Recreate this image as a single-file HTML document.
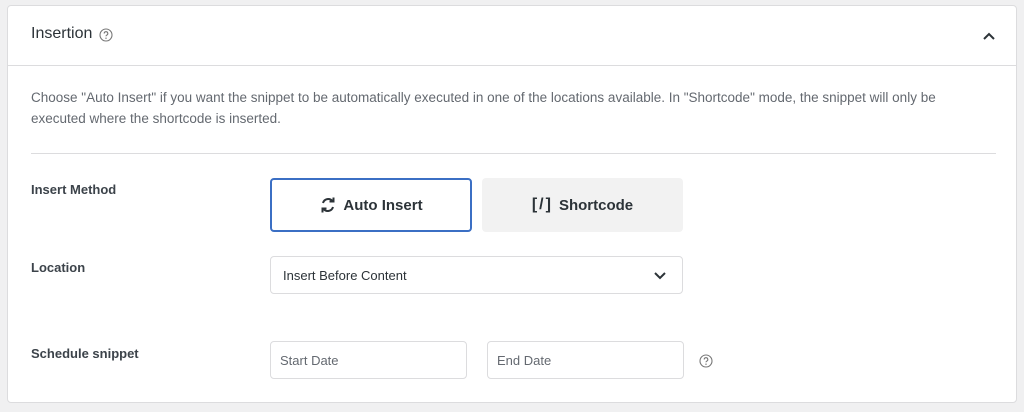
<!DOCTYPE html>
<html><head><style>
body{margin:0;width:1024px;height:412px;background:#f0f0f1;font-family:"Liberation Sans",sans-serif;position:relative;overflow:hidden;color:#2c3338}
.panel{position:absolute;left:7px;top:5px;width:1010px;height:398px;background:#fff;border:1px solid #dcdcde;border-radius:4px;box-sizing:border-box}
.hdr{height:59px;border-bottom:1px solid #dcdcde;position:relative}
.abs{position:absolute}
.lbl{position:absolute;left:23px;font-size:13px;font-weight:bold;color:#3c434a}
.box{position:absolute;box-sizing:border-box;border:1px solid #dcdcde;border-radius:4px;font-size:13px;color:#50575e}
</style></head><body>
<div class="panel">
 <div class="hdr">
  <div class="abs" style="left:23px;top:19px;font-size:16px;color:#2c3338">Insertion</div>
  <svg class="abs" style="left:91px;top:22px" width="14" height="14" viewBox="0 0 14 14"><circle cx="7" cy="7" r="6" fill="none" stroke="#777" stroke-width="1.1"/><path d="M5.2 5.5a1.8 1.8 0 1 1 2.6 1.6c-.6.3-.8.6-.8 1.2" fill="none" stroke="#777" stroke-width="1.1"/><circle cx="7" cy="10.2" r=".7" fill="#777"/></svg>
  <svg class="abs" style="left:975px;top:26px" width="12" height="8" viewBox="0 0 12 8"><path d="M1 7l5-5 5 5" fill="none" stroke="#2c3338" stroke-width="2"/></svg>
 </div>
 <div class="abs" style="left:23px;top:81px;width:960px;font-size:13.5px;line-height:21px;color:#646970">Choose "Auto Insert" if you want the snippet to be automatically executed in one of the locations available. In "Shortcode" mode, the snippet will only be<br>executed where the shortcode is inserted.</div>
 <div class="abs" style="left:23px;top:147px;width:965px;height:1px;background:#dcdcde"></div>
 <div class="lbl" style="top:176px">Insert Method</div>
 <div class="box" style="left:262px;top:172px;width:202px;height:54px;border:2px solid #3b6fc4;display:flex;align-items:center;justify-content:center;font-size:15px;font-weight:bold;color:#2c3338">
  <svg width="18" height="18" viewBox="0 0 18 18" style="margin-right:6px"><path d="M4 7a5.5 5.5 0 0 1 9.5-2M14 11a5.5 5.5 0 0 1-9.5 2" fill="none" stroke="#2c3338" stroke-width="2"/><path d="M14.5 1.5v4h-4M3.5 16.5v-4h4" fill="none" stroke="#2c3338" stroke-width="2"/></svg>Auto Insert</div>
 <div class="box" style="left:474px;top:172px;width:201px;height:54px;border:none;background:#f2f2f2;display:flex;align-items:center;justify-content:center;font-size:15px;font-weight:bold;color:#2c3338"><span style="font-weight:bold;font-size:16px;margin-right:6px;letter-spacing:2px">[/]</span>Shortcode</div>
 <div class="lbl" style="top:254px">Location</div>
 <div class="box" style="left:262px;top:250px;width:413px;height:38px;padding:11px 12px;color:#2c3338">Insert Before Content
  <svg class="abs" style="right:16px;top:15px" width="12" height="8" viewBox="0 0 12 8"><path d="M1 1l5 5 5-5" fill="none" stroke="#2c3338" stroke-width="2"/></svg></div>
 <div class="lbl" style="top:340px">Schedule snippet</div>
 <div class="box" style="left:262px;top:335px;width:197px;height:38px;padding:11px 9px;color:#646970">Start Date</div>
 <div class="box" style="left:479px;top:335px;width:197px;height:38px;padding:11px 9px;color:#646970">End Date</div>
 <svg class="abs" style="left:691px;top:348px" width="14" height="14" viewBox="0 0 14 14"><circle cx="7" cy="7" r="6" fill="none" stroke="#777" stroke-width="1.1"/><path d="M5.2 5.5a1.8 1.8 0 1 1 2.6 1.6c-.6.3-.8.6-.8 1.2" fill="none" stroke="#777" stroke-width="1.1"/><circle cx="7" cy="10.2" r=".7" fill="#777"/></svg>
</div>
</body></html>
